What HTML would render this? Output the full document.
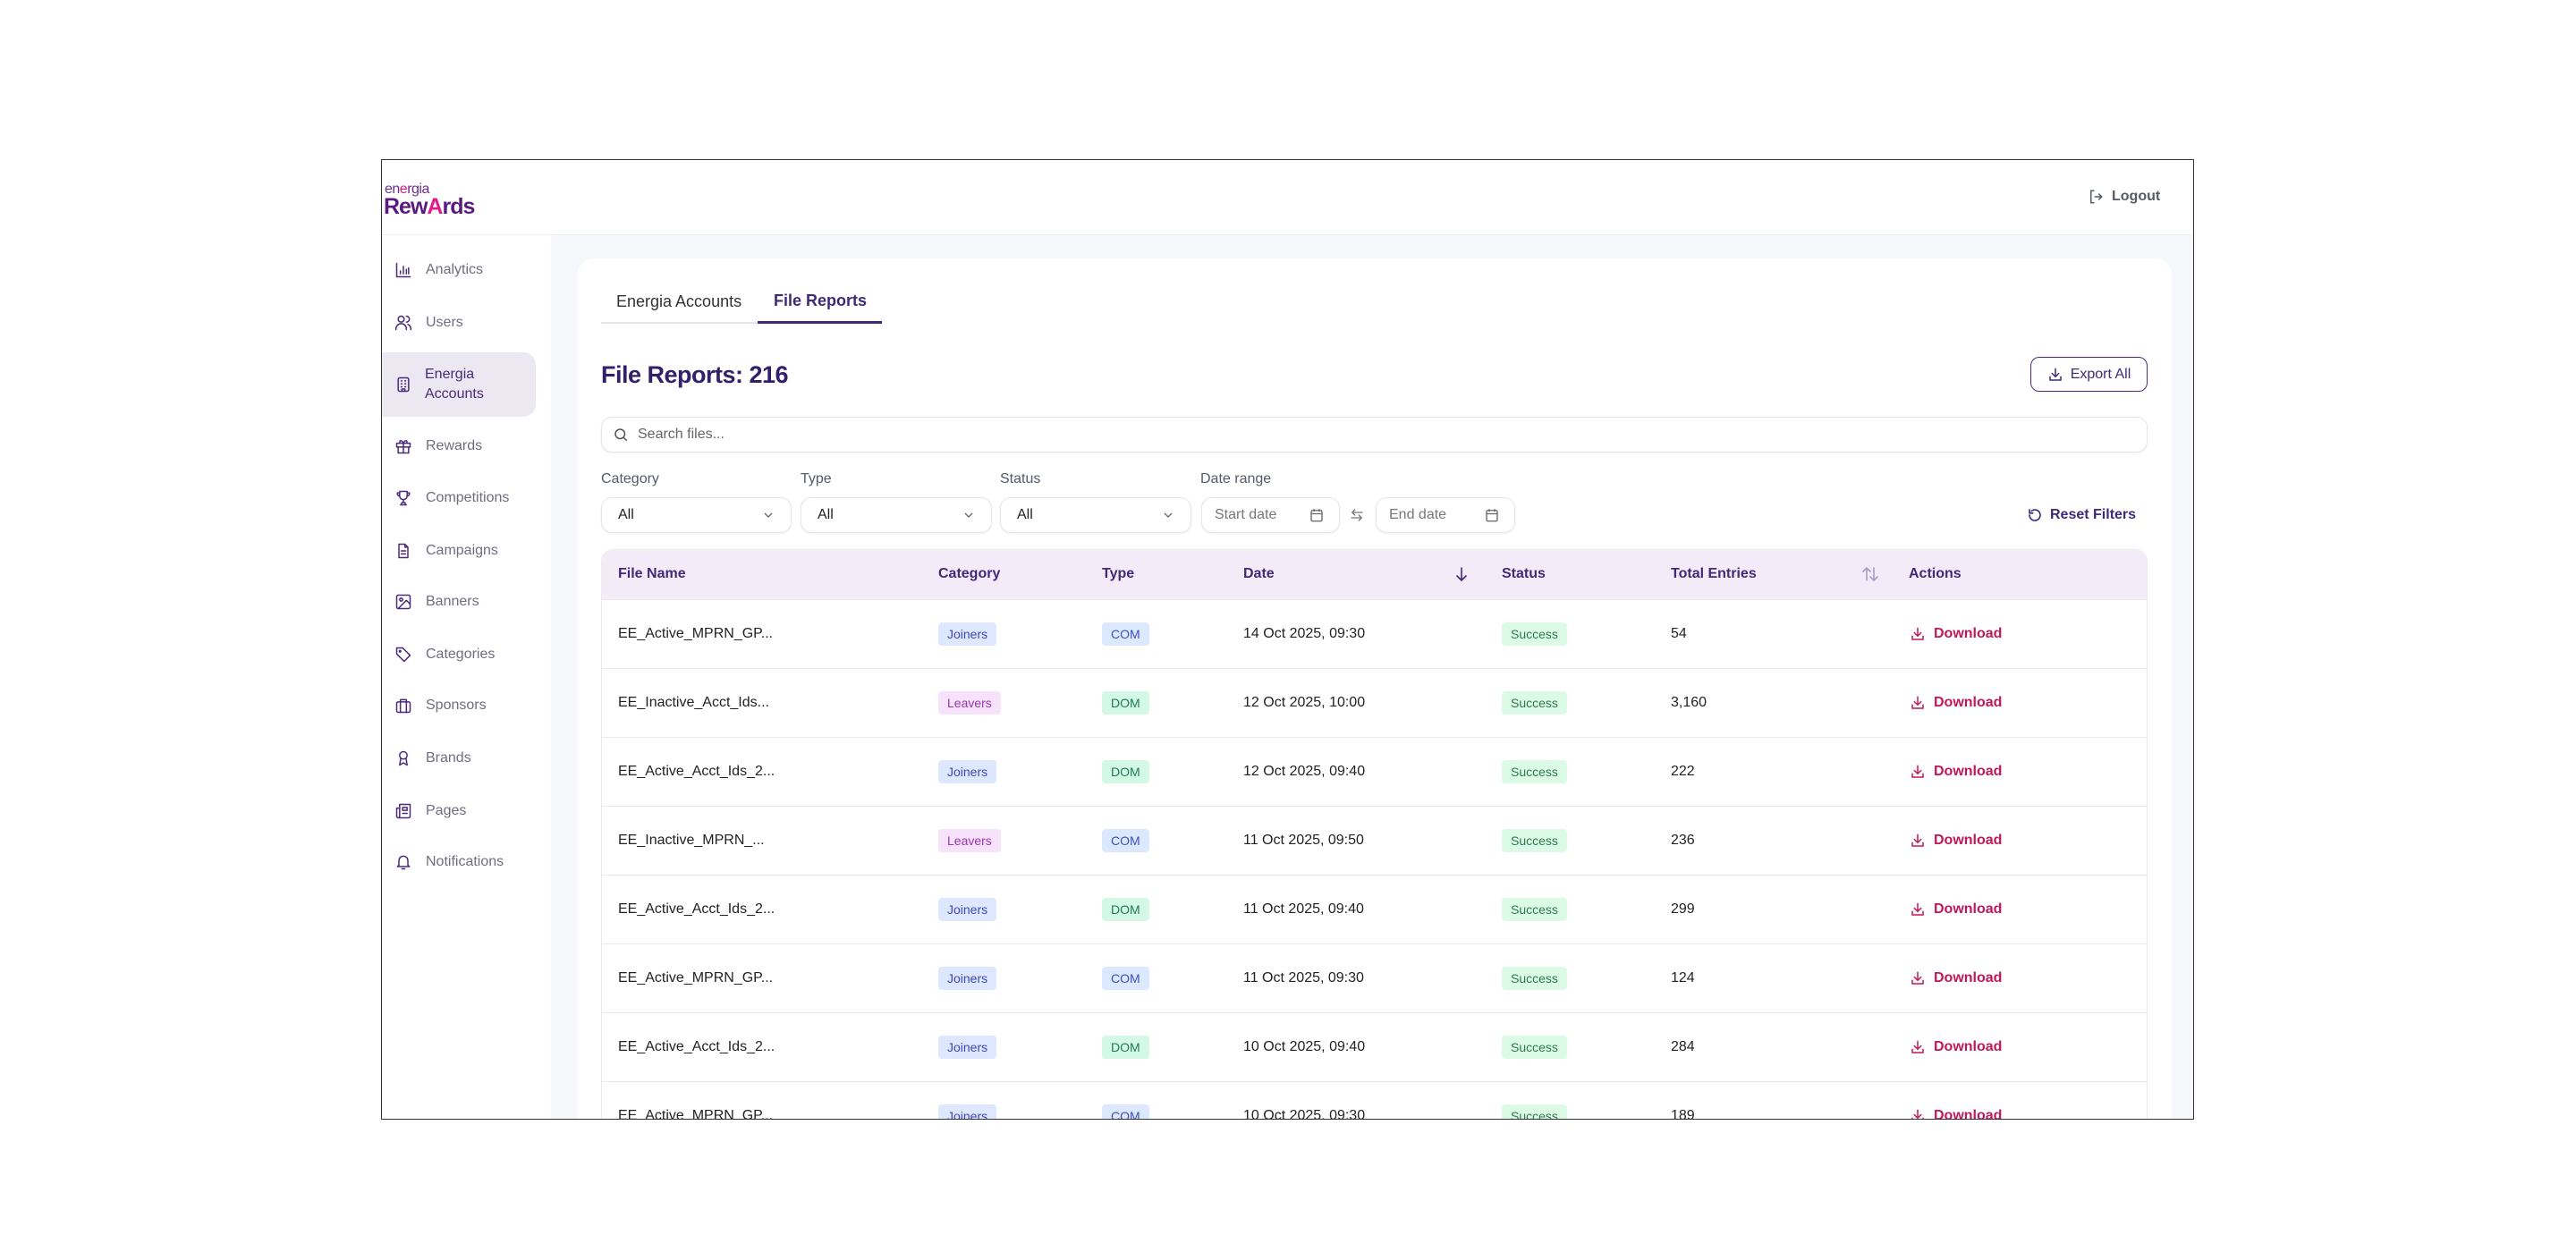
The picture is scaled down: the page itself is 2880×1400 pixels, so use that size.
<!DOCTYPE html>
<html><head><meta charset="utf-8">
<style>
*{box-sizing:border-box;margin:0;padding:0}
html,body{width:2880px;height:1400px;overflow:hidden}
body{background:#fff;font-family:"Liberation Sans",sans-serif;position:relative}
.frame{position:absolute;left:426px;top:178px;width:2027px;height:1074px;border:1.5px solid #333;overflow:hidden;background:#f7f8fc}
.abs{position:absolute}
.hdr{left:0;top:0;width:100%;height:84px;background:#fff;border-bottom:1px solid #eceef3}
.side{left:0;top:84px;width:189px;height:990px;background:#fff}
.nav{position:absolute;left:14px;height:20px;display:flex;align-items:center;font-size:16px;color:#6e6e80}
.nav svg{width:20px;height:20px;margin-right:15px;fill:none;stroke:#4a2a7a;stroke-width:1.8;stroke-linecap:round;stroke-linejoin:round}
.card{left:219px;top:110px;width:1782px;height:964px;background:#fff;border-radius:18px 18px 0 0;overflow:hidden}
.t{position:absolute;white-space:nowrap}
.box{position:absolute;border:1px solid #e4e5ea;border-radius:12px;background:#fff;box-shadow:0 1px 2px rgba(0,0,0,.05)}
.lbl{font-size:16px;color:#555a66}
.sel{font-size:16px;color:#222;display:flex;align-items:center;padding-left:18px}
.chev{position:absolute;right:20px;top:14px;width:10px;height:10px}
.th{font-size:16px;font-weight:bold;color:#3f2a78}
.row{position:absolute;left:0;width:100%;height:77px;border-top:1.5px solid #ebebef;font-size:16px;color:#222}
.badge{position:absolute;top:25px;height:26px;border-radius:4px;font-size:14px;line-height:26px;padding:0 10px}
.j{background:#dde8fe;color:#4048b8}.l{background:#f6e2fb;color:#9c34b0}
.com{background:#dbe8fe;color:#3f4fb8}.dom{background:#d3f8e6;color:#1f7a55}
.ok{background:#dcfbe6;color:#2e7a4e}
.dl{position:absolute;left:1479px;top:29px;color:#c0185a;font-weight:bold;font-size:16px;display:flex;align-items:center}
</style></head><body>
<div class="frame">
 <div class="abs hdr">
  <div class="t" style="left:3px;top:24px;font-size:16px;color:#6a2a8e;letter-spacing:-0.5px">en<span style="color:#e0197e">e</span>rgia</div>
  <div class="t" style="left:2px;top:38px;font-size:25px;font-weight:bold;color:#5a1a80;letter-spacing:-1px">Rew<span style="color:#e6198a">A</span>rds</div>
  <div class="t" style="left:1907px;top:32px;font-size:16px;font-weight:bold;color:#555a66;display:flex;align-items:center">
   <svg width="18" height="18" viewBox="0 0 24 24" fill="none" stroke="#555a66" stroke-width="2" stroke-linecap="round" style="margin-right:9px"><path d="M9 3H5v18h4M11 12h10M17 8l4 4-4 4"/></svg>Logout</div>
 </div>
 <div class="abs side">
  <div class="abs" style="left:0;top:131px;width:172px;height:72px;background:#ebe8f2;border-radius:0 14px 14px 0"></div>
  <div class="nav" style="top:29px"><svg viewBox="0 0 24 24"><path d="M3 3v18h18M8 17v-4M12 17V7M16 17v-6M19 17V9"/></svg>Analytics</div>
  <div class="nav" style="top:88px"><svg viewBox="0 0 24 24"><circle cx="9" cy="7" r="4"/><path d="M2 21v-1a7 7 0 0 1 14 0v1M16 3a4 4 0 0 1 0 8M22 21v-1a7 7 0 0 0-4-6"/></svg>Users</div>
  <div class="nav" style="top:145px;height:44px;color:#4a2a7a;line-height:22px"><svg viewBox="0 0 24 24" style="margin-right:14px"><rect x="5" y="3" width="14" height="18" rx="2"/><path d="M9 7h1M14 7h1M9 11h1M14 11h1M9 15h1M14 15h1M10 21v-3h4v3"/></svg><span>Energia<br>Accounts</span></div>
  <div class="nav" style="top:226px"><svg viewBox="0 0 24 24"><rect x="3" y="8" width="18" height="5"/><path d="M5 13v8h14v-8M12 8v13M12 8C10 3 6 4 7.5 7M12 8c2-5 6-4 4.5-1"/></svg>Rewards</div>
  <div class="nav" style="top:284px"><svg viewBox="0 0 24 24"><path d="M7 3h10v6a5 5 0 0 1-10 0zM12 14v4M8 21h8M9 21l1-3h4l1 3M7 5H4a3 3 0 0 0 3 4M17 5h3a3 3 0 0 1-3 4"/></svg>Competitions</div>
  <div class="nav" style="top:343px"><svg viewBox="0 0 24 24"><path d="M14 3H6v18h12V7zM14 3v4h4M9 12h6M9 16h6"/></svg>Campaigns</div>
  <div class="nav" style="top:400px"><svg viewBox="0 0 24 24"><rect x="3" y="3" width="18" height="18" rx="2"/><circle cx="9" cy="9" r="2"/><path d="M21 15l-5-5L5 21"/></svg>Banners</div>
  <div class="nav" style="top:459px"><svg viewBox="0 0 24 24"><path d="M3 3h8l10 10-8 8L3 11z"/><circle cx="7.5" cy="7.5" r="1"/></svg>Categories</div>
  <div class="nav" style="top:516px"><svg viewBox="0 0 24 24"><rect x="3" y="7" width="18" height="14" rx="2"/><path d="M8 7V4h8v3M8 7v14M16 7v14"/></svg>Sponsors</div>
  <div class="nav" style="top:575px"><svg viewBox="0 0 24 24"><circle cx="12" cy="8" r="5"/><path d="M8.5 12L7 21l5-3 5 3-1.5-9"/></svg>Brands</div>
  <div class="nav" style="top:634px"><svg viewBox="0 0 24 24"><path d="M7 3h14v16a2 2 0 0 1-2 2H5a2 2 0 0 1-2-2V8h4zM7 3v16a2 2 0 0 1-2 2M11 7h6v4h-6zM11 15h6"/></svg>Pages</div>
  <div class="nav" style="top:691px"><svg viewBox="0 0 24 24"><path d="M6 16V10a6 6 0 0 1 12 0v6l2 2H4zM10 21h4"/></svg>Notifications</div>
 </div>
 <div class="abs card">
  <div class="t" style="left:43px;top:38px;font-size:18px;color:#333">Energia Accounts</div>
  <div class="t" style="left:219px;top:37px;font-size:18px;color:#3f2a78;font-weight:bold">File Reports</div>
  <div class="abs" style="left:26px;top:71px;width:176px;height:1.5px;background:#e4e5ea"></div>
  <div class="abs" style="left:201px;top:70px;width:139px;height:3px;background:#3f2a78"></div>
  <div class="t" style="left:26px;top:115px;font-size:27px;font-weight:bold;color:#33206a;letter-spacing:-0.5px">File Reports: 216</div>
  <div class="abs" style="left:1624px;top:110px;width:131px;height:39px;border:1.5px solid #4a2a7a;border-radius:10px;display:flex;align-items:center;justify-content:center;font-size:16px;color:#3f2a78">
   <svg width="18" height="18" viewBox="0 0 24 24" fill="none" stroke="#3f2a78" stroke-width="2" stroke-linecap="round" style="margin-right:8px"><path d="M12 3v12M7 10l5 5 5-5M4 15v5h16v-5"/></svg>Export All</div>
  <div class="box" style="left:26px;top:177px;width:1729px;height:40px;display:flex;align-items:center;padding-left:12px;font-size:16px;color:#666">
   <svg width="18" height="18" viewBox="0 0 24 24" fill="none" stroke="#555" stroke-width="2" style="margin-right:10px"><circle cx="11" cy="11" r="7"/><path d="M16 16l5 5"/></svg>Search files...</div>
  <div class="t lbl" style="left:26px;top:238px">Category</div>
  <div class="t lbl" style="left:249px;top:238px">Type</div>
  <div class="t lbl" style="left:472px;top:238px">Status</div>
  <div class="t lbl" style="left:696px;top:238px">Date range</div>
  <div class="box sel" style="left:26px;top:267px;width:213px;height:40px">All<svg class="chev" viewBox="0 0 10 10" fill="none" stroke="#666" stroke-width="1.3"><path d="M1 3l4 4 4-4"/></svg></div>
  <div class="box sel" style="left:249px;top:267px;width:214px;height:40px">All<svg class="chev" viewBox="0 0 10 10" fill="none" stroke="#666" stroke-width="1.3"><path d="M1 3l4 4 4-4"/></svg></div>
  <div class="box sel" style="left:472px;top:267px;width:214px;height:40px">All<svg class="chev" viewBox="0 0 10 10" fill="none" stroke="#666" stroke-width="1.3"><path d="M1 3l4 4 4-4"/></svg></div>
  <div class="box sel" style="left:697px;top:267px;width:155px;height:40px;color:#777;padding-left:14px">Start date<svg style="position:absolute;right:16px;top:10px" width="18" height="18" viewBox="0 0 24 24" fill="none" stroke="#666" stroke-width="1.8"><rect x="4" y="5" width="16" height="16" rx="2"/><path d="M4 10h16M8 3v4M16 3v4"/></svg></div>
  <svg class="abs" style="left:862px;top:278px" width="18" height="18" viewBox="0 0 24 24" fill="none" stroke="#777" stroke-width="1.8" stroke-linecap="round"><path d="M20 8H5M9 4L5 8l4 4M4 16h15M15 12l4 4-4 4"/></svg>
  <div class="box sel" style="left:892px;top:267px;width:156px;height:40px;color:#777;padding-left:14px">End date<svg style="position:absolute;right:16px;top:10px" width="18" height="18" viewBox="0 0 24 24" fill="none" stroke="#666" stroke-width="1.8"><rect x="4" y="5" width="16" height="16" rx="2"/><path d="M4 10h16M8 3v4M16 3v4"/></svg></div>
  <div class="t" style="left:1620px;top:278px;font-size:16px;font-weight:bold;color:#3f2a78;display:flex;align-items:center">
   <svg width="18" height="18" viewBox="0 0 24 24" fill="none" stroke="#3f2a78" stroke-width="2.2" stroke-linecap="round" style="margin-right:8px"><path d="M4 12a8 8 0 1 0 3-6.2M4 4v5h5"/></svg>Reset Filters</div>
  <div class="abs" style="left:26px;top:325px;width:1729px;height:640px;border:1.5px solid #ebebef;border-bottom:none;border-radius:14px 14px 0 0;overflow:hidden">
   <div class="abs" style="left:0;top:0;width:100%;height:55px;background:#f3ebf7"></div>
   <div class="t th" style="left:18px;top:18px">File Name</div>
   <div class="t th" style="left:376px;top:18px">Category</div>
   <div class="t th" style="left:559px;top:18px">Type</div>
   <div class="t th" style="left:717px;top:18px">Date</div>
   <svg class="abs" style="left:953px;top:18px" width="16" height="18" viewBox="0 0 16 18" fill="none" stroke="#3f2a78" stroke-width="1.6" stroke-linecap="round"><path d="M8 2v14M3 11l5 5 5-5"/></svg>
   <div class="t th" style="left:1006px;top:18px">Status</div>
   <div class="t th" style="left:1195px;top:18px">Total Entries</div>
   <svg class="abs" style="left:1408px;top:18px" width="20" height="18" viewBox="0 0 20 18" fill="none" stroke="#a89cc4" stroke-width="1.6" stroke-linecap="round"><path d="M6 16V2M2 6l4-4 4 4M14 2v14M10 12l4 4 4-4"/></svg>
   <div class="t th" style="left:1461px;top:18px">Actions</div>
   <div id="rows"></div>
  </div>
 </div>
</div>
<script>
var d=[["EE_Active_MPRN_GP...","Joiners","j","COM","com","14 Oct 2025, 09:30","54"],
["EE_Inactive_Acct_Ids...","Leavers","l","DOM","dom","12 Oct 2025, 10:00","3,160"],
["EE_Active_Acct_Ids_2...","Joiners","j","DOM","dom","12 Oct 2025, 09:40","222"],
["EE_Inactive_MPRN_...","Leavers","l","COM","com","11 Oct 2025, 09:50","236"],
["EE_Active_Acct_Ids_2...","Joiners","j","DOM","dom","11 Oct 2025, 09:40","299"],
["EE_Active_MPRN_GP...","Joiners","j","COM","com","11 Oct 2025, 09:30","124"],
["EE_Active_Acct_Ids_2...","Joiners","j","DOM","dom","10 Oct 2025, 09:40","284"],
["EE_Active_MPRN_GP...","Joiners","j","COM","com","10 Oct 2025, 09:30","189"]];
var h="";
d.forEach(function(r,i){
h+='<div class="row" style="top:'+(55+i*77)+'px">'+
'<div class="t" style="left:18px;top:29px">'+r[0]+'</div>'+
'<div class="badge '+r[2]+'" style="left:376px">'+r[1]+'</div>'+
'<div class="badge '+r[4]+'" style="left:559px">'+r[3]+'</div>'+
'<div class="t" style="left:717px;top:29px">'+r[5]+'</div>'+
'<div class="badge ok" style="left:1006px">Success</div>'+
'<div class="t" style="left:1195px;top:29px">'+r[6]+'</div>'+
'<div class="dl"><svg width="18" height="18" viewBox="0 0 24 24" fill="none" stroke="#c0185a" stroke-width="2" stroke-linecap="round" style="margin-right:9px;margin-left:-17px"><path d="M12 3v12M7 10l5 5 5-5M4 15v5h16v-5"/></svg>Download</div></div>';
});
document.getElementById("rows").innerHTML=h;
</script>
</body></html>
